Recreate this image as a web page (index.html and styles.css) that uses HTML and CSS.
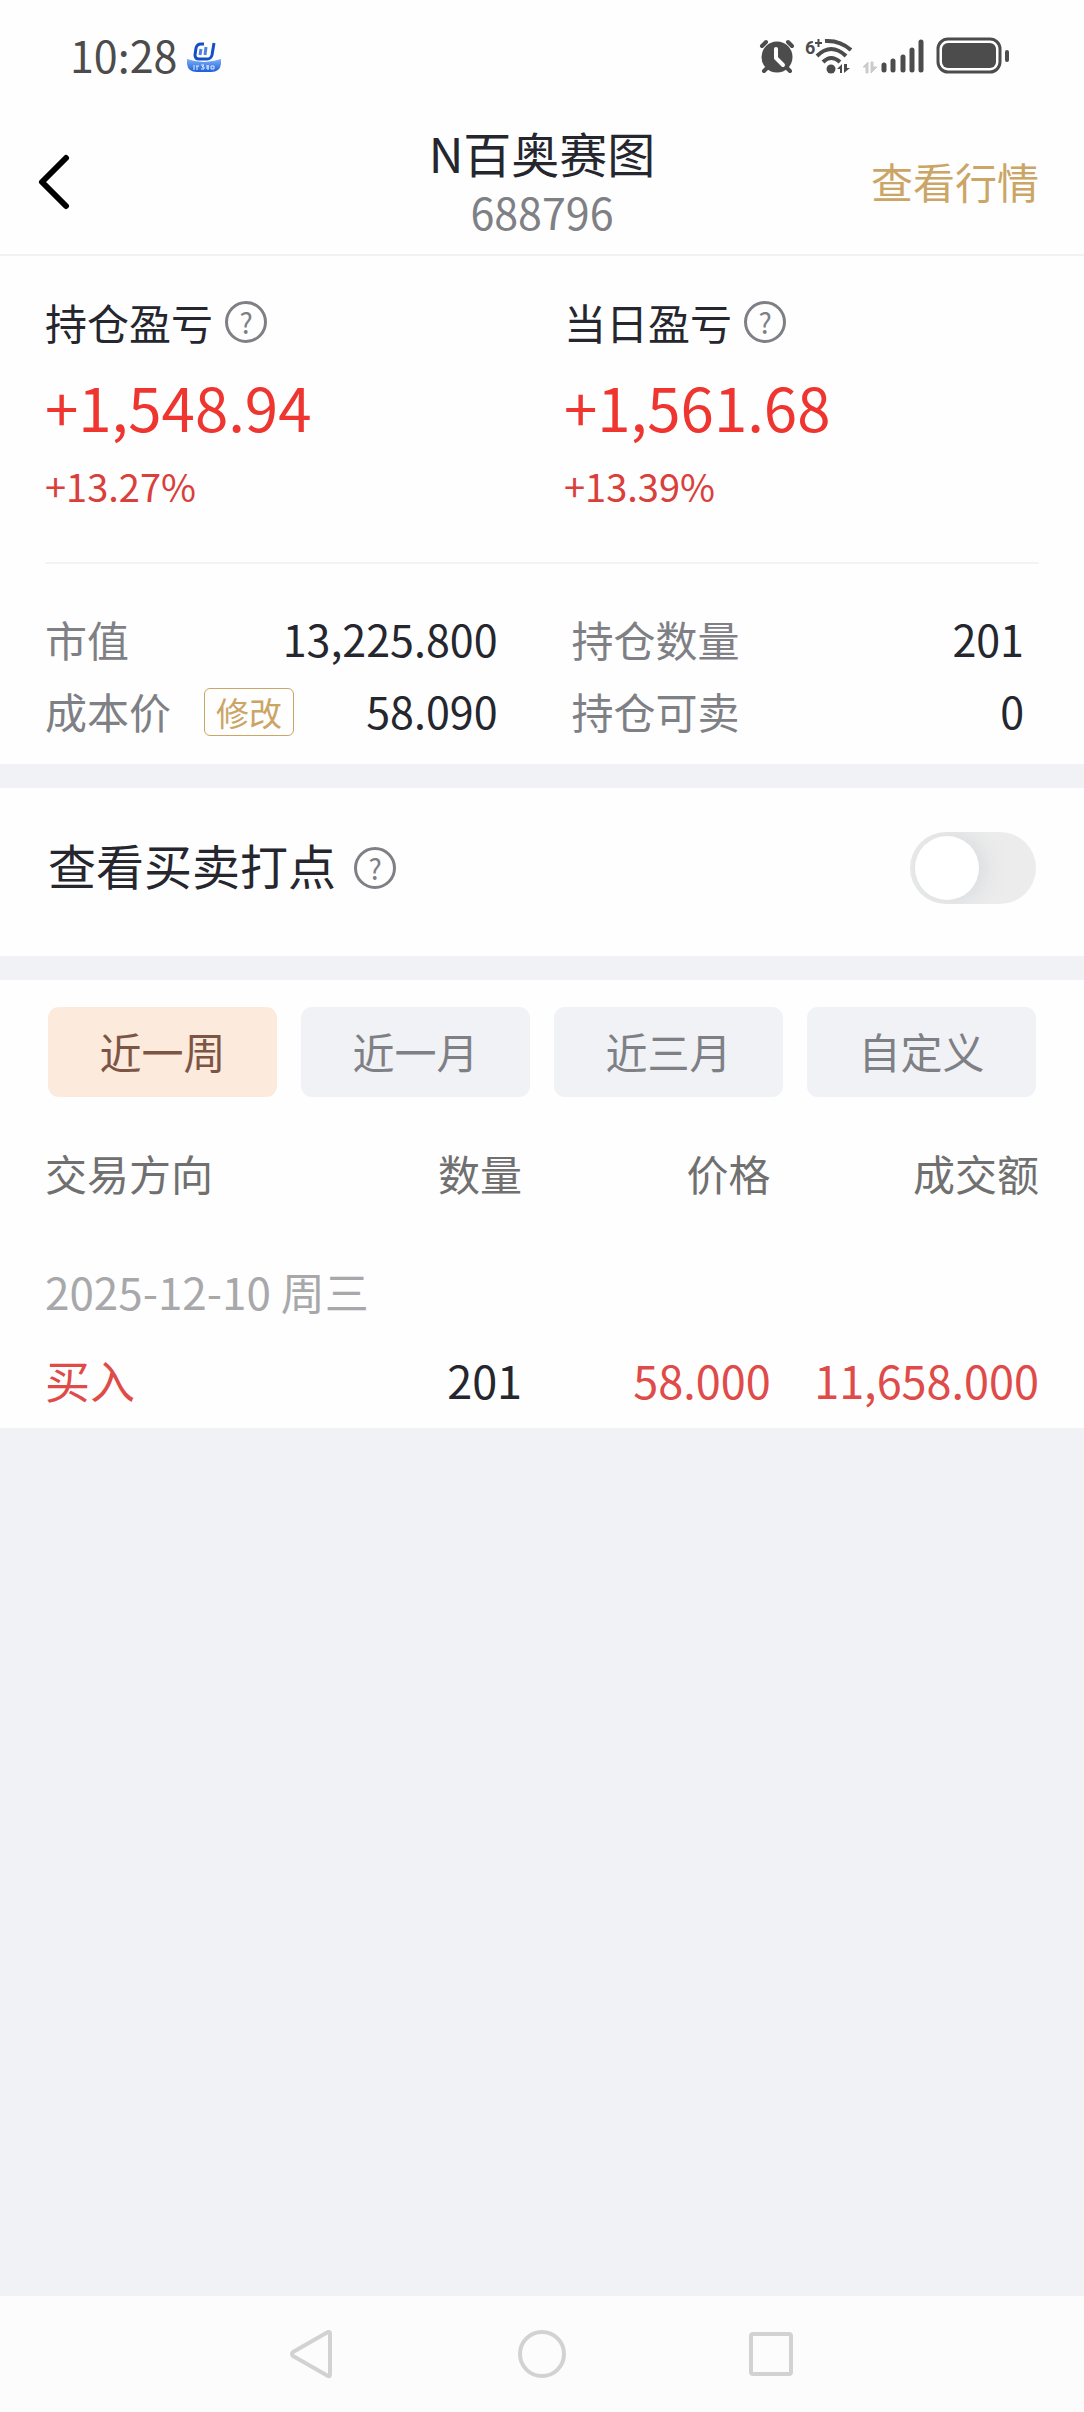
FILE: index.html
```html
<!DOCTYPE html>
<html lang="zh-CN">

<head>
    <meta charset="UTF-8">
    <meta name="viewport" content="width=device-width, initial-scale=1.0">
    <title>N百奥赛图 688796</title>
    <link rel="stylesheet" href="styles.css">
</head>

<body>
    <div class="status-bar">
        <div class="status-left">
            <span class="clock">10:28</span>
            <svg class="app-icon" width="34" height="32" viewBox="0 0 34 32">
                <defs>
                    <linearGradient id="bowl" x1="0" y1="0" x2="0" y2="1">
                        <stop offset="0" stop-color="#7fb0f5" />
                        <stop offset="1" stop-color="#1b5fd9" />
                    </linearGradient>
                </defs>
                <path d="M0 18 Q17 24 34 18 V23 Q33 31 24 31 H10 Q1 31 0 23 Z" fill="url(#bowl)" />
                <path d="M17 3 H14 Q10 3 9 7 L8 14 Q8 18 12 18 H20 Q24 18 25 14 L27 2" fill="none" stroke="#1450c4" stroke-width="3" />
                <path d="M14 8 L13 14 M19 6 L18 14" fill="none" stroke="#4f82dc" stroke-width="3" />
                <path d="M7 24 V29 M9 25 H12 M10 25 V29 M14 24 H17 L15 26 H17 V28 H14 M19 25 H22 M19 27 H22 M21 24 V29 M24 25 H27 V28 H24 Z" fill="none" stroke="#e3edfd" stroke-width="1" />
            </svg>
        </div>
        <div class="status-right">
            <svg width="36" height="38" viewBox="0 0 36 38">
                <g stroke="#4c4c4c" stroke-width="4" stroke-linecap="round">
                    <path d="M3 9 L7 5 M33 9 L29 5 M8 31 L5 34 M28 31 L31 34" />
                </g>
                <circle cx="18" cy="20" r="15.5" fill="#4c4c4c" />
                <path d="M17 12 V21 L24 28" fill="none" stroke="#fff" stroke-width="4" stroke-linecap="round" stroke-linejoin="round" />
            </svg>
            <svg class="wifi" width="48" height="38" viewBox="0 0 48 38">
                <text class="wifi-gen" x="0" y="17">6</text>
                <path d="M10 6 H17 M13.5 2 V10" stroke="#4c4c4c" stroke-width="2" />
                <g fill="none" stroke="#4c4c4c" stroke-width="4">
                    <path d="M20 4 Q35 3 46 13" />
                    <path d="M12 19 Q26 5 41 19" />
                    <path d="M18 25 Q26 17 35 25" />
                </g>
                <circle cx="26" cy="32" r="4.5" fill="#4c4c4c" />
                <path d="M32 32 L37 27 V36 H35 V32 Z M39 27 V36 L45 31 H42 V27 Z" fill="#4c4c4c" />
            </svg>
            <svg class="signal" width="64" height="38" viewBox="0 0 64 38">
                <path d="M1 30 L6 25 V36 H4 V30 Z M9 25 V36 L15 30 H11 V25 Z" fill="#cbcbcb" stroke="#cbcbcb" />
                <g stroke="#4c4c4c" stroke-width="5" stroke-linecap="round">
                    <path d="M22 28 V33 M31 24 V33 M41 20 V33 M50 13 V33 M59 5 V33" />
                </g>
            </svg>
            <svg class="battery" width="74" height="38" viewBox="0 0 74 38">
                <rect x="2" y="2" width="62" height="33" rx="10" fill="none" stroke="#4c4c4c" stroke-width="3" />
                <rect x="6" y="6" width="54" height="25" rx="6" fill="#4c4c4c" />
                <rect x="69" y="13" width="4" height="12" rx="2" fill="#4c4c4c" />
            </svg>
        </div>
    </div>

    <header class="header">
        <button class="back" type="button" aria-label="返回">
            <svg width="32" height="56" viewBox="0 0 32 56">
                <path d="M28 4 L4 28 L28 52" fill="none" stroke="#000" stroke-width="6" stroke-linecap="round" stroke-linejoin="round" />
            </svg>
        </button>
        <div class="stock">
            <h1>N百奥赛图</h1>
            <p>688796</p>
        </div>
        <a class="quote-link" href="#">查看行情</a>
    </header>

    <main>
        <section class="position">
            <div class="profit">
                <div>
                    <div class="profit-label">持仓盈亏 <button class="help" type="button">?</button></div>
                    <div class="profit-value">+1,548.94</div>
                    <div class="profit-rate">+13.27%</div>
                </div>
                <div>
                    <div class="profit-label">当日盈亏 <button class="help" type="button">?</button></div>
                    <div class="profit-value">+1,561.68</div>
                    <div class="profit-rate">+13.39%</div>
                </div>
            </div>
            <dl class="detail">
                <div class="detail-item">
                    <dt>市值</dt>
                    <dd>13,225.800</dd>
                </div>
                <div class="detail-item">
                    <dt>持仓数量</dt>
                    <dd>201</dd>
                </div>
                <div class="detail-item">
                    <dt>成本价 <button class="edit" type="button">修改</button></dt>
                    <dd>58.090</dd>
                </div>
                <div class="detail-item">
                    <dt>持仓可卖</dt>
                    <dd>0</dd>
                </div>
            </dl>
        </section>

        <section class="marker">
            <label for="marker-switch">查看买卖打点</label>
            <button class="help" type="button">?</button>
            <input class="switch" id="marker-switch" type="checkbox" role="switch">
        </section>

        <section class="trades">
            <div class="tabs">
                <button class="tab active" type="button">近一周</button>
                <button class="tab" type="button">近一月</button>
                <button class="tab" type="button">近三月</button>
                <button class="tab" type="button">自定义</button>
            </div>
            <table>
                <thead>
                    <tr>
                        <th>交易方向</th>
                        <th>数量</th>
                        <th>价格</th>
                        <th>成交额</th>
                    </tr>
                </thead>
                <tbody>
                    <tr class="date">
                        <td colspan="4">2025-12-10 周三</td>
                    </tr>
                    <tr class="trade">
                        <td class="red">买入</td>
                        <td>201</td>
                        <td class="red">58.000</td>
                        <td class="red">11,658.000</td>
                    </tr>
                </tbody>
            </table>
        </section>
    </main>

    <nav class="nav-bar">
        <button type="button" aria-label="后退">
            <svg width="48" height="52" viewBox="0 0 48 52">
                <path d="M40 4 Q41 4 41 6 V46 Q41 49 39 48 L4 28 Q2 26 4 24 L39 4 Z" fill="none" stroke="#d2d2d2" stroke-width="4" stroke-linejoin="round" />
            </svg>
        </button>
        <button type="button" aria-label="主页">
            <svg width="48" height="52" viewBox="0 0 48 52">
                <circle cx="24" cy="26" r="22" fill="none" stroke="#d2d2d2" stroke-width="4" />
            </svg>
        </button>
        <button type="button" aria-label="最近任务">
            <svg width="48" height="52" viewBox="0 0 48 52">
                <rect x="4" y="6" width="40" height="40" rx="2" fill="none" stroke="#d2d2d2" stroke-width="4" />
            </svg>
        </button>
    </nav>
</body>

</html>
```

FILE: styles.css
```css
* {
    box-sizing: border-box;
}

body {
    margin: 0;
    min-height: 100vh;
    display: flex;
    flex-direction: column;
    background: #f1f2f5;
    color: #25262e;
    font-family: "Noto Sans CJK SC", sans-serif;
    font-size: 42px;
}

button {
    margin: 0;
    padding: 0;
    border: none;
    background: none;
    font-family: inherit;
    cursor: pointer;
}

svg {
    display: block;
}

h1,
p,
dl,
dd {
    margin: 0;
    font-weight: normal;
}

/* status bar */
.status-bar {
    display: flex;
    justify-content: space-between;
    align-items: center;
    height: 110px;
    padding: 2px 74px 0 70px;
    background: #fefefe;
    color: #4c4c4c;
}

.status-left,
.status-right {
    display: flex;
    align-items: center;
}

.status-left {
    gap: 10px;
    font-size: 43px;
    line-height: 56px;
}

.clock {
    padding-bottom: 4px;
}

.app-icon {
    margin-top: 2px;
}

.wifi {
    margin-left: 10px;
}

.wifi-gen {
    font-family: Roboto, sans-serif;
    font-size: 18px;
    font-weight: bold;
    fill: #4c4c4c;
}

.signal {
    margin-left: 9px;
}

.battery {
    margin-left: 10px;
}

/* header */
.header {
    display: grid;
    grid-template-columns: 1fr auto 1fr;
    align-items: center;
    height: 146px;
    padding: 0 38px;
    border-bottom: 2px solid #f2f2f3;
    background: #fefefe;
}

.back {
    justify-self: start;
}

.stock {
    text-align: center;
}

.stock h1 {
    font-size: 48px;
    line-height: 58px;
}

.stock p {
    color: #7e8085;
    font-size: 43px;
    line-height: 60px;
}

.quote-link {
    justify-self: end;
    padding: 0 7px 4px 0;
    color: #cba566;
    text-decoration: none;
}

/* position */
.position {
    background: #fefefe;
    padding: 36px 45px 18px;
}

.profit {
    display: grid;
    grid-template-columns: 1fr 1fr;
    gap: 44px;
    padding-bottom: 48px;
    border-bottom: 2px solid #f3f3f4;
}

.profit-label {
    display: flex;
    align-items: center;
    gap: 12px;
    line-height: 60px;
}

.help {
    width: 42px;
    height: 42px;
    border: 3px solid #7e8085;
    border-radius: 50%;
    color: #7e8085;
    font-size: 28px;
    line-height: 34px;
}

.profit-value {
    margin-top: 12px;
    color: #ee352f;
    font-size: 60px;
    line-height: 84px;
}

.profit-rate {
    margin-top: 10px;
    color: #d9403b;
    font-size: 38px;
    line-height: 56px;
}

.detail {
    display: grid;
    grid-template-columns: 1fr 1fr;
    column-gap: 74px;
    padding: 38px 15px 0 0;
}

.detail-item {
    display: flex;
    justify-content: space-between;
    align-items: center;
    height: 72px;
}

.detail dt {
    display: flex;
    align-items: center;
    gap: 33px;
    color: #7e8085;
}

.detail dd {
    font-size: 43px;
}

.edit {
    width: 90px;
    height: 48px;
    margin-top: 4px;
    border: 1px solid #cba566;
    border-radius: 6px;
    color: #cba566;
    font-size: 33px;
    line-height: 44px;
}

/* marker switch */
.marker {
    display: flex;
    align-items: center;
    gap: 18px;
    height: 168px;
    margin: 24px 0;
    padding: 0 48px 8px;
    background: #fefefe;
    font-size: 48px;
}

.marker label {
    padding-bottom: 8px;
}

.switch {
    appearance: none;
    width: 126px;
    height: 72px;
    margin: 0 0 0 auto;
    padding: 4px 5px;
    border-radius: 36px;
    background: #ececec;
    overflow: hidden;
    cursor: pointer;
}

.switch::before {
    content: "";
    display: block;
    width: 64px;
    height: 64px;
    border-radius: 50%;
    background: #fff;
    box-shadow: 4px 0 22px rgba(170, 180, 190, 0.35);
}

.switch:checked {
    background: #cba566;
}

.switch:checked::before {
    margin-left: auto;
}

/* trades */
.trades {
    padding: 27px 45px 18px;
    background: #fefefe;
}

.tabs {
    display: grid;
    grid-template-columns: repeat(4, 1fr);
    gap: 24px;
    padding: 0 3px;
}

.tab {
    height: 90px;
    padding-bottom: 3px;
    border-radius: 11px;
    background: #f1f2f5;
    color: #7e8085;
    font-size: 42px;
}

.tab.active {
    background: #fceadd;
    color: #7d5545;
}

table {
    width: 100%;
    margin-top: 15px;
    border-collapse: collapse;
    table-layout: fixed;
}

th,
td {
    padding: 0;
    text-align: right;
    font-weight: normal;
    white-space: nowrap;
}

th {
    width: 26%;
    height: 120px;
    color: #707070;
}

th:first-child,
td:first-child {
    text-align: left;
}

th:first-child {
    width: 22%;
}

th:nth-child(3) {
    width: 25%;
}

th:last-child {
    width: 27%;
}

.date td {
    height: 118px;
    color: #a8a8ab;
    font-size: 44px;
}

.trade td {
    height: 60px;
    font-size: 45px;
    line-height: 60px;
}

.trade .red {
    color: #df4b49;
}

/* system navigation */
.nav-bar {
    display: flex;
    justify-content: center;
    gap: 181px;
    height: 116px;
    margin-top: auto;
    background: #fcfcfc;
}
```
